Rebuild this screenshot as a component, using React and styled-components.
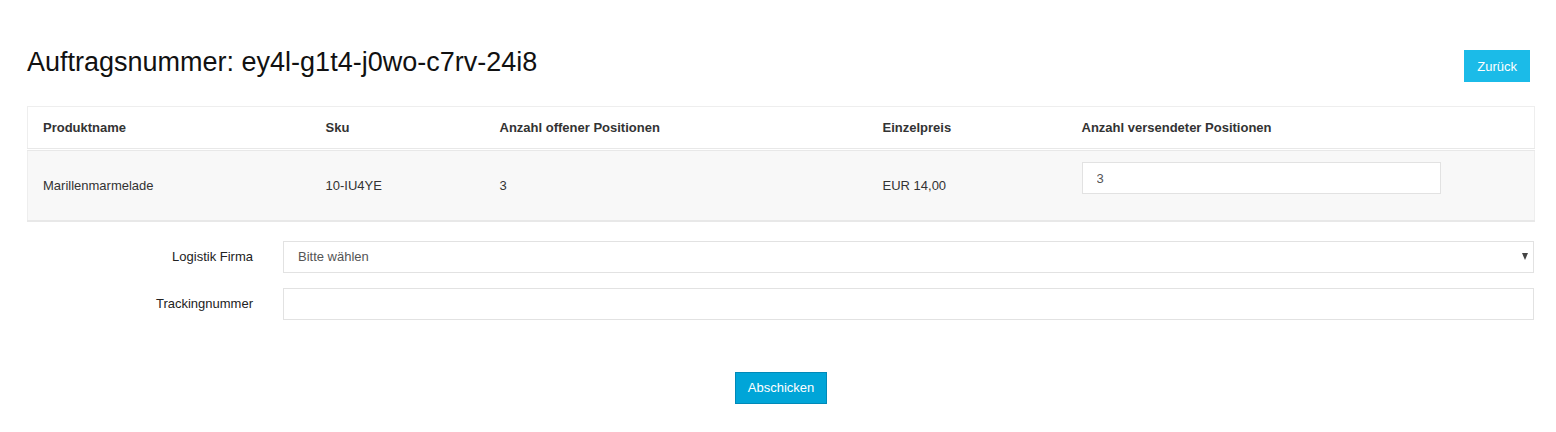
import styled, { createGlobalStyle } from "styled-components";

const GlobalStyle = createGlobalStyle`
  body {
    margin: 0;
    background: #fff;
    font-family: "Liberation Sans", Arial, sans-serif;
    font-size: 13px;
    color: #333;
  }
  * { box-sizing: border-box; }
`;

const Page = styled.div`
  padding: 42px 21px 28px 27px;
`;

const Header = styled.div`
  display: flex;
  justify-content: space-between;
  align-items: flex-start;
  margin-bottom: 24px;
`;

const Title = styled.h1`
  margin: 4px 0 0;
  font-size: 27px;
  font-weight: normal;
  line-height: 32px;
  color: #111;
`;

const Button = styled.button`
  font-family: "Liberation Sans", Arial, sans-serif;
  font-size: 13px;
  color: #fff;
  background: ${(p) => (p.variant === "primary" ? "#00a5d8" : "#1bbbe8")};
  border: 1px solid ${(p) => (p.variant === "primary" ? "#0089b8" : "#1bbbe8")};
  height: 32px;
  padding: 0 12px;
  margin-top: ${(p) => (p.variant === "primary" ? "0" : "8px")};
  margin-right: ${(p) => (p.variant === "primary" ? "0" : "5px")};
  cursor: pointer;
`;

const Table = styled.table`
  width: 100%;
  border-collapse: collapse;
  border: 1px solid #eee;
`;

const HeadCell = styled.th`
  text-align: left;
  font-weight: bold;
  height: 43px;
  padding: 0 15px;
  border-bottom: 3px double #e8e8e8;
  width: ${(p) => p.w};
`;

const BodyRow = styled.tr`
  background: #f8f8f8;
  border-bottom: 2px solid #e8e8e8;
`;

const Cell = styled.td`
  height: 71px;
  padding: 0 15px;
  vertical-align: ${(p) => (p.top ? "top" : "middle")};
  padding-top: ${(p) => (p.top ? "11px" : "0")};
`;

const QtyInput = styled.input`
  width: 359px;
  height: 32px;
  border: 1px solid #e2e2e2;
  background: #fff;
  padding: 0 14px;
  font-family: "Liberation Sans", Arial, sans-serif;
  font-size: 13px;
  color: #555;
  outline: none;
`;

const Form = styled.div`
  display: flex;
  flex-direction: column;
  gap: 15px;
  margin-top: 19px;
`;

const FormRow = styled.div`
  display: grid;
  grid-template-columns: 226px 1fr;
  column-gap: 30px;
  align-items: center;
  margin-right: 1px;
`;

const Label = styled.label`
  text-align: right;
  color: #222;
`;

const SelectBox = styled.div`
  position: relative;
  height: 32px;
  border: 1px solid #e2e2e2;
  display: flex;
  align-items: center;
  padding: 0 14px;
  color: #555;
`;

const Arrow = styled.span`
  position: absolute;
  right: 5px;
  top: 11px;
  width: 0;
  height: 0;
  border-left: 3.5px solid transparent;
  border-right: 3.5px solid transparent;
  border-top: 7px solid #444;
`;

const TextInput = styled.input`
  height: 32px;
  border: 1px solid #e2e2e2;
  padding: 0 14px;
  outline: none;
`;

const Footer = styled.div`
  display: flex;
  justify-content: center;
  margin-top: 52px;
`;

const columns = [
  { label: "Produktname", w: "283px" },
  { label: "Sku", w: "174px" },
  { label: "Anzahl offener Positionen", w: "383px" },
  { label: "Einzelpreis", w: "199px" },
  { label: "Anzahl versendeter Positionen", w: "auto" },
];

export default function App() {
  return (
    <>
      <GlobalStyle />
      <Page>
        <Header>
          <Title>Auftragsnummer: ey4l-g1t4-j0wo-c7rv-24i8</Title>
          <Button>Zurück</Button>
        </Header>
        <Table>
          <thead>
            <tr>
              {columns.map((c) => (
                <HeadCell key={c.label} w={c.w}>
                  {c.label}
                </HeadCell>
              ))}
            </tr>
          </thead>
          <tbody>
            <BodyRow>
              <Cell>Marillenmarmelade</Cell>
              <Cell>10-IU4YE</Cell>
              <Cell>3</Cell>
              <Cell>EUR 14,00</Cell>
              <Cell top>
                <QtyInput defaultValue="3" />
              </Cell>
            </BodyRow>
          </tbody>
        </Table>
        <Form>
          <FormRow>
            <Label>Logistik Firma</Label>
            <SelectBox>
              Bitte wählen
              <Arrow />
            </SelectBox>
          </FormRow>
          <FormRow>
            <Label>Trackingnummer</Label>
            <TextInput />
          </FormRow>
        </Form>
        <Footer>
          <Button variant="primary">Abschicken</Button>
        </Footer>
      </Page>
    </>
  );
}
